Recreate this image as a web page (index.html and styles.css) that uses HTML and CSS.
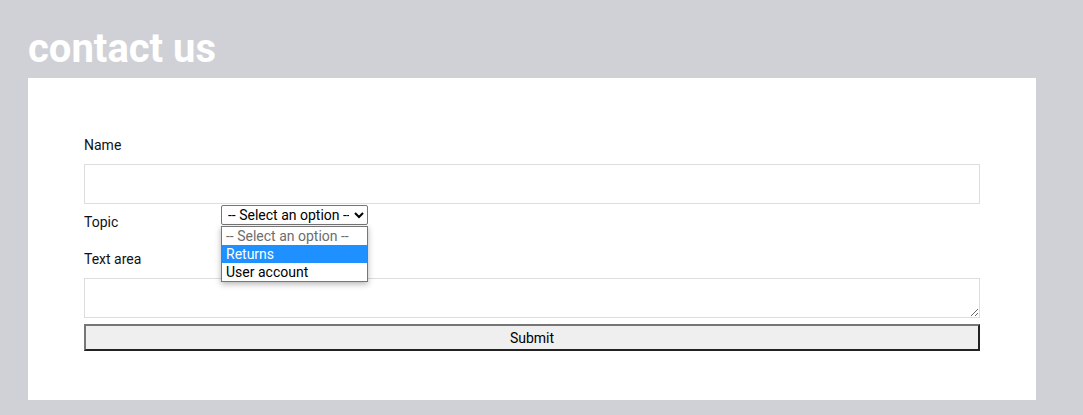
FILE: index.html
```html
<!DOCTYPE html>
<html lang="en">
<head>
    <meta charset="UTF-8">
    <meta name="viewport" content="width=device-width, initial-scale=1.0">
    <title>Contact us</title>
    <link rel="stylesheet" href="styles.css">
</head>
<body>
    <h1 class="page-title">contact us</h1>
    <div class="panel">
        <form id="contactForm">
            <label for="name" class="field-label">Name</label>
            <input type="text" id="name" class="field-input">

            <div class="topic-row">
                <label for="topic" class="field-label topic-label">Topic</label>
                <div class="select-wrap">
                    <select id="topic" class="topic-select">
                        <option>-- Select an option --</option>
                        <option>Returns</option>
                        <option>User account</option>
                    </select>
                    <!-- lista aberta do select -->
                    <ul class="select-menu">
                        <li class="menu-item disabled">-- Select an option --</li>
                        <li class="menu-item active">Returns</li>
                        <li class="menu-item">User account</li>
                    </ul>
                </div>
            </div>

            <label for="message" class="field-label area-label">Text area</label>
            <textarea id="message" class="field-input field-area"></textarea>

            <button type="submit" class="submit-btn">Submit</button>
        </form>
    </div>
</body>
</html>
```

FILE: styles.css
```css
* {
    margin: 0;
    padding: 0;
    box-sizing: border-box;
    font-family: Roboto, Arial, sans-serif;
}

body {
    background-color: #d0d1d6;
    padding: 25px 47px 0 28px;
}

.page-title {
    color: white;
    font-size: 40px;
    font-weight: 700;
    line-height: 47px;
    margin-bottom: 6px;
}

.panel {
    background-color: white;
    padding: 59px 56px 49px 56px;
}

.field-label {
    display: block;
    font-size: 14px;
    line-height: 16px;
    color: #111;
    margin-bottom: 11px;
}

.field-input {
    display: block;
    width: 100%;
    height: 40px;
    border: 1px solid #ddd;
    font-size: 14px;
    padding: 4px 8px;
    outline: none;
}

.field-area {
    resize: vertical;
}

.topic-row {
    display: flex;
    align-items: flex-start;
}

.topic-label {
    width: 137px;
    margin-top: 10px;
    margin-bottom: 0;
}

.select-wrap {
    position: relative;
}

.topic-select {
    display: block;
    width: 147px;
    font-size: 14px;
    height: 20px;
    margin-top: 1px;
    padding: 0 2px;
    border: 1px solid #767676;
    border-radius: 2px;
    color: #000;
    background: white;
}

/* dropdown aberto por cima do formulario */
.select-menu {
    position: absolute;
    top: 22px;
    left: 0;
    width: 147px;
    list-style: none;
    background: white;
    border: 1px solid #767676;
    box-shadow: 0 2px 6px rgba(0, 0, 0, 0.3);
    padding: 0;
    z-index: 10;
}

.menu-item {
    font-size: 14px;
    line-height: 18px;
    padding: 0 4px;
    color: #000;
}

.menu-item.disabled {
    color: #6d6d6d;
}

.menu-item.active {
    background-color: #1e90ff;
    color: white;
}

.area-label {
    margin-top: 21px;
}

.submit-btn {
    display: block;
    width: 100%;
    height: 27px;
    margin-top: 6px;
    background-color: #efefef;
    border: 2px solid;
    border-color: #767676 #222 #222 #767676;
    font-size: 14px;
    color: #000;
    cursor: pointer;
}
```
